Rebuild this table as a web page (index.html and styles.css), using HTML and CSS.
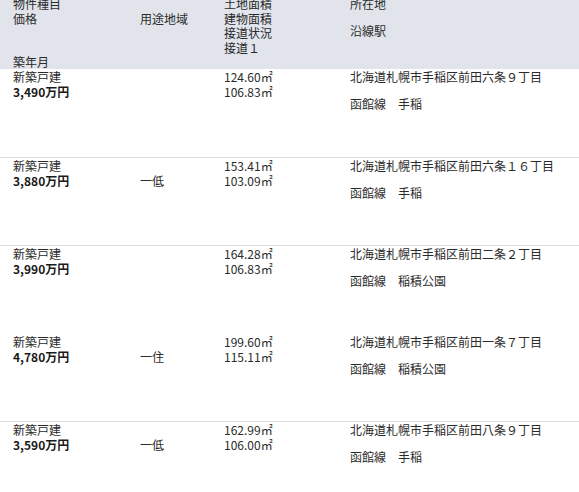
FILE: index.html
```html
<!DOCTYPE html>
<html lang="ja">
<head>
<meta charset="utf-8">
<link rel="stylesheet" href="styles.css">
</head>
<body>
<div class="list">
  <div class="row head">
    <div class="c1"><div>物件種目</div><div>価格</div><div class="blank"></div><div class="blank"></div><div>築年月</div></div>
    <div class="c2"><div class="blank"></div><div>用途地域</div></div>
    <div class="c3"><div>土地面積</div><div>建物面積</div><div>接道状況</div><div>接道１</div></div>
    <div class="c4"><div class="addr">所在地</div><div>沿線駅</div></div>
  </div>

  <div class="row item first">
    <div class="c1"><div>新築戸建</div><div class="price">3,490万円</div></div>
    <div class="c2"><div class="blank"></div><div></div></div>
    <div class="c3"><div>124.60㎡</div><div>106.83㎡</div></div>
    <div class="c4"><div class="addr">北海道札幌市手稲区前田六条９丁目</div><div>函館線　手稲</div></div>
  </div>

  <div class="row item">
    <div class="c1"><div>新築戸建</div><div class="price">3,880万円</div></div>
    <div class="c2"><div class="blank"></div><div>一低</div></div>
    <div class="c3"><div>153.41㎡</div><div>103.09㎡</div></div>
    <div class="c4"><div class="addr">北海道札幌市手稲区前田六条１６丁目</div><div>函館線　手稲</div></div>
  </div>

  <div class="row item">
    <div class="c1"><div>新築戸建</div><div class="price">3,990万円</div></div>
    <div class="c2"><div class="blank"></div><div></div></div>
    <div class="c3"><div>164.28㎡</div><div>106.83㎡</div></div>
    <div class="c4"><div class="addr">北海道札幌市手稲区前田二条２丁目</div><div>函館線　稲積公園</div></div>
  </div>

  <div class="row item noline">
    <div class="c1"><div>新築戸建</div><div class="price">4,780万円</div></div>
    <div class="c2"><div class="blank"></div><div>一住</div></div>
    <div class="c3"><div>199.60㎡</div><div>115.11㎡</div></div>
    <div class="c4"><div class="addr">北海道札幌市手稲区前田一条７丁目</div><div>函館線　稲積公園</div></div>
  </div>

  <div class="row item">
    <div class="c1"><div>新築戸建</div><div class="price">3,590万円</div></div>
    <div class="c2"><div class="blank"></div><div>一低</div></div>
    <div class="c3"><div>162.99㎡</div><div>106.00㎡</div></div>
    <div class="c4"><div class="addr">北海道札幌市手稲区前田八条９丁目</div><div>函館線　手稲</div></div>
  </div>
</div>
</body>
</html>
```

FILE: styles.css
```css
html, body {
  margin: 0;
  padding: 0;
  background: #ffffff;
}

body {
  font-family: "Noto Sans CJK JP", "Noto Sans", sans-serif;
  font-size: 12px;
  line-height: 14.5px;
  color: #2b2b2b;
  overflow: hidden;
}

.list {
  width: 579px;
}

.row {
  display: grid;
  grid-template-columns: 126px 85px 126px 1fr;
  padding-left: 13px;
}

.head {
  background: #e1e5eb;
  height: 72px;
  margin-top: -3px;
}

.item {
  height: 86px;
  padding-top: 1px;
  border-top: 1px solid #dcdcdc;
}

.item.first {
  border-top: 0;
  height: 87px;
}

.item.noline {
  border-top-color: #ffffff;
}

.blank {
  height: 14.5px;
}

.price {
  font-weight: bold;
  color: #1a1a1a;
}

.c2 {
  padding-left: 1px;
}

.addr {
  margin-bottom: 12.5px;
}
```
